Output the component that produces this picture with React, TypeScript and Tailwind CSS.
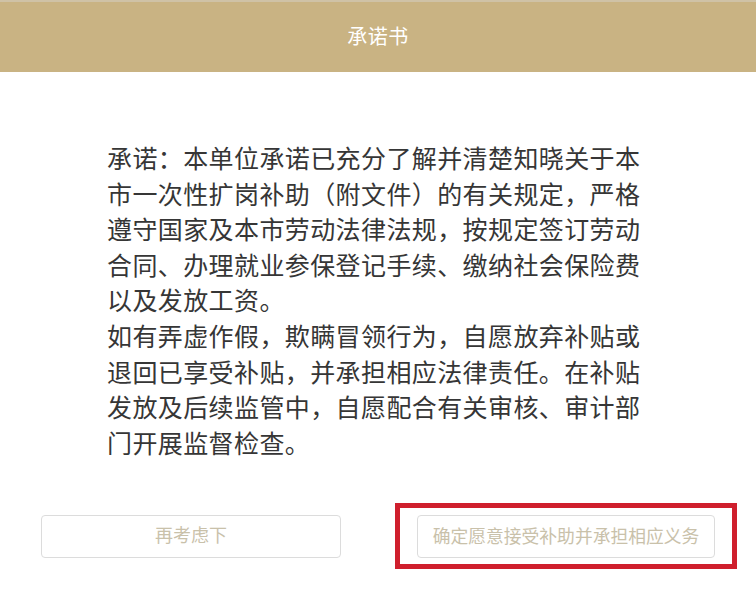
import React from 'react'

const font = { fontFamily: '"Liberation Sans", "Noto Sans CJK SC", sans-serif' }

export default function App() {
  return (
    <div className="w-[756px] h-[597px] bg-white overflow-hidden" style={font}>
      {/* Header */}
      <div className="h-[72px] bg-[#c9b383] border-t-2 border-[#cfc2a6] flex items-center justify-center">
        <span className="text-white text-[20px] tracking-[0.5px]">承诺书</span>
      </div>

      {/* Body */}
      <div className="ml-[107px] mt-[70px] w-[540px] text-[25px] tracking-[0.4px] leading-[35.6px] text-[#363636]">
        <p>
          承诺：本单位承诺已充分了解并清楚知晓关于本市一次性扩岗补助（附文件）的有关规定，严格遵守国家及本市劳动法律法规，按规定签订劳动合同、办理就业参保登记手续、缴纳社会保险费以及发放工资。
        </p>
        <p>
          如有弄虚作假，欺瞒冒领行为，自愿放弃补贴或退回已享受补贴，并承担相应法律责任。在补贴发放及后续监管中，自愿配合有关审核、审计部门开展监督检查。
        </p>
      </div>

      {/* Actions */}
      <div className="mt-[41px] pl-[41px] flex items-start gap-[54px]">
        <button className="mt-[12px] w-[300px] h-[43px] rounded-[4px] border-[1.5px] border-[#dcdcdc] bg-white text-[18px] text-[#c9c1aa]">
          再考虑下
        </button>
        <div className="border-[5px] border-[#cf1f2d] px-[17px] pt-[7px] pb-[6px]">
          <button className="w-[298px] h-[43px] rounded-[4px] border-[1.5px] border-[#dcdcdc] bg-white text-[17.8px] text-[#c9c1aa]">
            确定愿意接受补助并承担相应义务
          </button>
        </div>
      </div>
    </div>
  )
}
